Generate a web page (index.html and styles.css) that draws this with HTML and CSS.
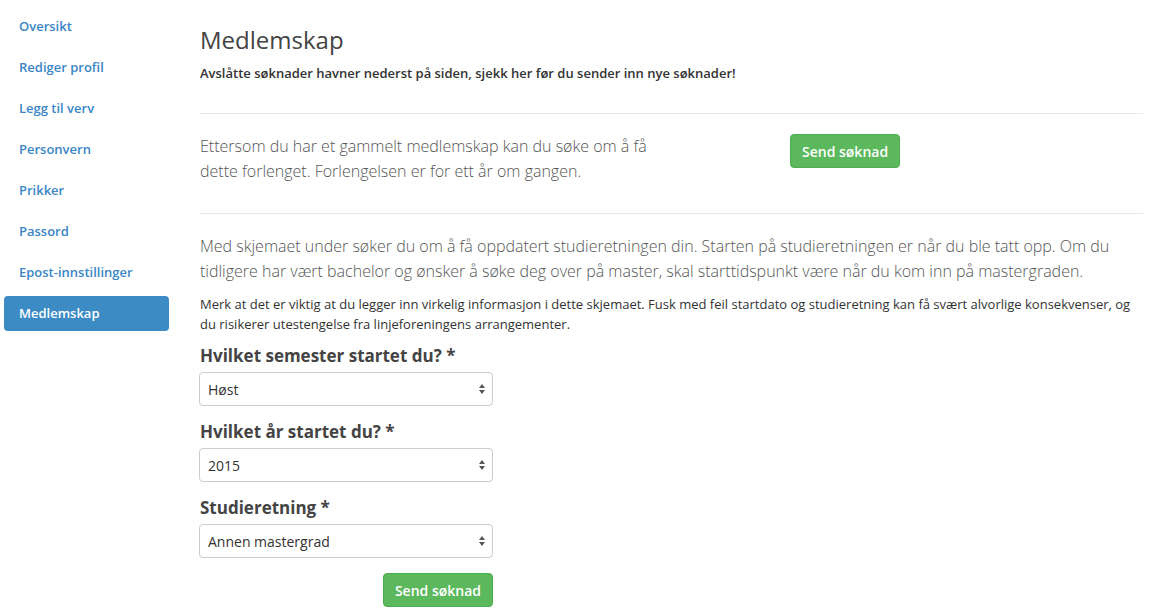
FILE: index.html
```html
<!DOCTYPE html>
<html lang="no">
<head>
<meta charset="utf-8">
<title>Medlemskap</title>
<link rel="stylesheet" href="styles.css">
</head>
<body>
<div class="page">
  <nav class="sidebar">
    <a class="nav-item" href="#">Oversikt</a>
    <a class="nav-item" href="#">Rediger profil</a>
    <a class="nav-item" href="#">Legg til verv</a>
    <a class="nav-item" href="#">Personvern</a>
    <a class="nav-item" href="#">Prikker</a>
    <a class="nav-item" href="#">Passord</a>
    <a class="nav-item" href="#">Epost-innstillinger</a>
    <a class="nav-item active" href="#">Medlemskap</a>
  </nav>
  <main class="main">
    <h2 class="title">Medlemskap</h2>
    <p class="notice">Avslåtte søknader havner nederst på siden, sjekk her før du sender inn nye søknader!</p>
    <hr class="rule">
    <div class="renew-row">
      <p class="lead-text renew-text">Ettersom du har et gammelt medlemskap kan du søke om å få dette forlenget. Forlengelsen er for ett år om gangen.</p>
      <button class="btn-success" type="button">Send søknad</button>
    </div>
    <hr class="rule">
    <p class="lead-text">Med skjemaet under søker du om å få oppdatert studieretningen din. Starten på studieretningen er når du ble tatt opp. Om du tidligere har vært bachelor og ønsker å søke deg over på master, skal starttidspunkt være når du kom inn på mastergraden.</p>
    <p class="small-text">Merk at det er viktig at du legger inn virkelig informasjon i dette skjemaet. Fusk med feil startdato og studieretning kan få svært alvorlige konsekvenser, og du risikerer utestengelse fra linjeforeningens arrangementer.</p>
    <form class="form">
      <label class="field-label" for="sem">Hvilket semester startet du? *</label>
      <select class="select" id="sem"><option>Høst</option><option>Vår</option></select>
      <label class="field-label" for="year">Hvilket år startet du? *</label>
      <select class="select" id="year"><option>2015</option></select>
      <label class="field-label" for="field">Studieretning *</label>
      <select class="select" id="field"><option>Annen mastergrad</option></select>
      <div class="form-actions">
        <button class="btn-success" type="button">Send søknad</button>
      </div>
    </form>
  </main>
</div>
</body>
</html>
```

FILE: styles.css
```css
* { box-sizing: border-box; }
html, body { margin: 0; padding: 0; background: #fff; }
body {
  font-family: "Open Sans", "Liberation Sans", sans-serif;
  color: #555;
  overflow: hidden;
}
.page {
  display: grid;
  grid-template-columns: 165px 944px;
  column-gap: 30px;
  padding-left: 4px;
}
.sidebar {
  display: flex;
  flex-direction: column;
  gap: 6px;
  padding-top: 9px;
}
.nav-item {
  display: block;
  height: 35px;
  line-height: 35px;
  padding-left: 15px;
  border-radius: 4px;
  font-size: 13px;
  font-weight: 600;
  color: #3a86c6;
  text-decoration: none;
}
.nav-item.active {
  background: #3c8bc5;
  color: #fff;
}
.main { padding-top: 26px; }
.title {
  margin: 0;
  font-size: 24px;
  line-height: 28px;
  font-weight: 400;
  color: #444;
  padding-left: 1px;
}
.notice {
  margin: 10px 0 0;
  font-size: 13px;
  line-height: 18px;
  font-weight: 600;
  color: #333;
  padding-left: 1px;
}
.rule {
  margin: 31px 0 0;
  border: 0;
  border-top: 1px solid #e8e8e8;
}
.renew-row {
  display: grid;
  grid-template-columns: 591px auto;
  align-items: start;
  padding-top: 20px;
  padding-bottom: 22px;
}
.renew-row + .rule { margin-top: 7px; }
.lead-text {
  margin: 0;
  font-size: 16px;
  line-height: 25px;
  font-weight: 300;
  color: #555;
  padding-left: 1px;
}
.renew-text { max-width: 472px; }
.rule + .lead-text { margin-top: 20px; }
.renew-row .btn-success { justify-self: start; margin-top: 0; }
.small-text {
  margin: 10px 0 0;
  font-size: 13px;
  line-height: 20px;
  font-weight: 400;
  color: #333;
  padding-left: 1px;
}
.form {
  width: 294px;
  display: flex;
  flex-direction: column;
  margin-top: 11px;
}
.field-label {
  display: block;
  font-size: 17px;
  line-height: 22px;
  font-weight: 700;
  color: #444;
  margin-bottom: 5px;
  padding-left: 1px;
}
.select {
  display: block;
  width: 294px;
  height: 34px;
  padding: 0 24px 0 8px;
  border: 1px solid #ccc;
  border-radius: 4px;
  background-color: #fff;
  background-image: url("data:image/svg+xml;utf8,<svg xmlns='http://www.w3.org/2000/svg' width='8' height='12' viewBox='0 0 8 12'><path d='M4 1 L7 5 H1 Z M4 11 L7 7 H1 Z' fill='%23555'/></svg>");
  background-repeat: no-repeat;
  background-position: right 6px center;
  -webkit-appearance: none;
  appearance: none;
  font-family: "Open Sans", "Liberation Sans", sans-serif;
  font-size: 14px;
  color: #333;
  margin-bottom: 15px;
}
.form-actions {
  display: flex;
  justify-content: flex-end;
  margin-top: 0;
}
.btn-success {
  height: 34px;
  padding: 0 11px;
  border: 1px solid #4cae4c;
  border-radius: 4px;
  background: #5cb85c;
  color: #fff;
  font-family: "Open Sans", "Liberation Sans", sans-serif;
  font-size: 14px;
  font-weight: 600;
  cursor: pointer;
}
```
